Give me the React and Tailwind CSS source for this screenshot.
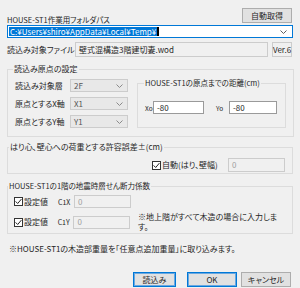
import React from 'react';

// 下向きの細いシェブロン（コンボボックス用）
const Chevron = ({ color = '#5f5f5f' }) => (
  <svg width="7" height="4" viewBox="0 0 7 4" className="shrink-0">
    <polyline points="0.5,0.5 3.5,3.5 6.5,0.5" fill="none" stroke={color} strokeWidth="1" />
  </svg>
);

const Check = () => (
  <span className="w-[9px] h-[9px] border border-[#333333] bg-white flex items-center justify-center shrink-0">
    <svg width="7" height="7" viewBox="0 0 7 7">
      <polyline points="0.6,3.4 2.7,5.5 6.4,1.1" fill="none" stroke="#222222" strokeWidth="1" />
    </svg>
  </span>
);

const Select = ({ value }) => (
  <div className="w-[58px] h-[13px] bg-[#e8e8e8] border border-[#cccccc] flex items-center justify-between pl-[3px] pr-[4px] text-[#555555]">
    <span>{value}</span>
    <Chevron color="#8a8a8a" />
  </div>
);

const Disabled = ({ w, h = 'h-[13px]' }) => (
  <div className={`${w} ${h} bg-[#f0f0f0] border border-[#cccccc] flex items-center pl-[3px] text-[#a0a0a0]`}>0</div>
);

const Button = ({ children, w, primary }) => (
  <button
    className={`${w} h-[15px] bg-[#e1e1e1] flex items-center justify-center ${
      primary ? 'border border-[#0078d7] shadow-[inset_0_0_0_1px_#6aa8e0]' : 'border border-[#adadad]'
    }`}
  >
    {children}
  </button>
);

export default function App() {
  return (
    <div className="w-[300px] h-[288px] overflow-hidden bg-[#f0f0f0] px-[7px] pt-[8px] text-[8px] leading-[10px] text-[#262626] font-['Noto_Sans_CJK_JP',sans-serif] [font-feature-settings:'palt']">
      <div className="flex items-end justify-between">
        <span className="text-[7.5px]">HOUSE-ST1作業用フォルダパス</span>
        <div className="mb-[2px] mr-[1px]">
          <Button w="w-[50px]">自動取得</Button>
        </div>
      </div>

      <div className="h-[13px] bg-white border border-[#0078d7] flex items-center pl-[1px] pr-[5px]">
        <span className="bg-[#0078d7] text-white px-[1px] leading-[9px]">C:¥Users¥shiro¥AppData¥Local¥Temp¥</span>
        <span className="w-[2px] h-[9px] bg-black" />
        <span className="flex-1" />
        <Chevron />
      </div>

      <div className="mt-[4px] flex items-center">
        <span className="w-[68px]">読込み対象ファイル</span>
        <div className="w-[193px] h-[15px] bg-[#f0f0f0] border border-[#cccccc] flex items-center pl-[3px]">壁式混構造3階建切妻.wod</div>
        <div className="ml-[4px] w-[20px] h-[15px] bg-[#f0f0f0] border border-[#cccccc] flex items-center justify-center">Ver.6</div>
      </div>

      <fieldset className="mt-[7px] border border-[#dcdcdc] px-[7px] pb-[8px]">
        <legend className="-ml-[2px] px-[1px]">読込み原点の設定</legend>
        <div className="flex">
          <div className="pt-[5px] flex flex-col gap-[5px]">
            {[
              ['読込み対象層', '2F'],
              ['原点とするX軸', 'X1'],
              ['原点とするY軸', 'Y1'],
            ].map(([label, v]) => (
              <div key={label} className="flex items-center">
                <span className="w-[55px]">{label}</span>
                <Select value={v} />
              </div>
            ))}
          </div>
          <fieldset className="ml-[9px] mt-[4px] flex-1 border border-[#dcdcdc] pl-[7px] pr-[8px] pb-[13px]">
            <legend className="-ml-[1px] px-[1px] text-[7.5px]">HOUSE-ST1の原点までの距離(cm)</legend>
            <div className="mt-[13px] flex items-center">
              <span className="w-[8px] text-[6.5px]">Xo</span>
              <div className="w-[51px] h-[13px] bg-white border border-[#9a9a9a] flex items-center pl-[3px]">-80</div>
              <span className="ml-[12px] w-[13px] text-[6.5px]">Yo</span>
              <div className="w-[48px] h-[13px] bg-white border border-[#9a9a9a] flex items-center pl-[3px]">-80</div>
            </div>
          </fieldset>
        </div>
      </fieldset>

      <fieldset className="mt-[5px] border border-[#dcdcdc] px-[7px] pb-[1px]">
        <legend className="-ml-[6px] px-[1px]">はり心、壁心への荷重とする許容誤差±(cm)</legend>
        <div className="mt-[6px] flex items-center justify-end">
          <Check />
          <span className="ml-[1px] w-[66px]">自動(はり、壁幅)</span>
          <Disabled w="w-[57px]" h="h-[14px]" />
        </div>
      </fieldset>

      <fieldset className="mt-[7px] border border-[#dcdcdc] px-[6px] pb-[1px]">
        <legend className="-ml-[6px] px-[1px] text-[7.5px]">HOUSE-ST1の1階の地震時層せん断力係数</legend>
        <div className="mt-[4px] flex flex-col gap-[4px]">
          {['C1X', 'C1Y'].map((c) => (
            <div key={c} className="flex items-center">
              <Check />
              <span className="ml-[1px] w-[34px]">設定値</span>
              <span className="w-[16px] text-[7px]">{c}</span>
              <Disabled w="w-[57px]" />
              {c === 'C1Y' && <span className="ml-[8px]">※地上階がすべて木造の場合に入力します。</span>}
            </div>
          ))}
        </div>
      </fieldset>

      <p className="mt-[10px] ml-[2px]">※HOUSE-ST1の木造部重量を「任意点追加重量」に取り込みます。</p>

      <div className="mt-[18px] mr-[2px] flex justify-end">
        <Button w="w-[43px]" primary>読込み</Button>
        <div className="ml-[11px]">
          <Button w="w-[50px]" primary>OK</Button>
        </div>
        <div className="ml-[4px]">
          <Button w="w-[50px]">キャンセル</Button>
        </div>
      </div>
    </div>
  );
}
